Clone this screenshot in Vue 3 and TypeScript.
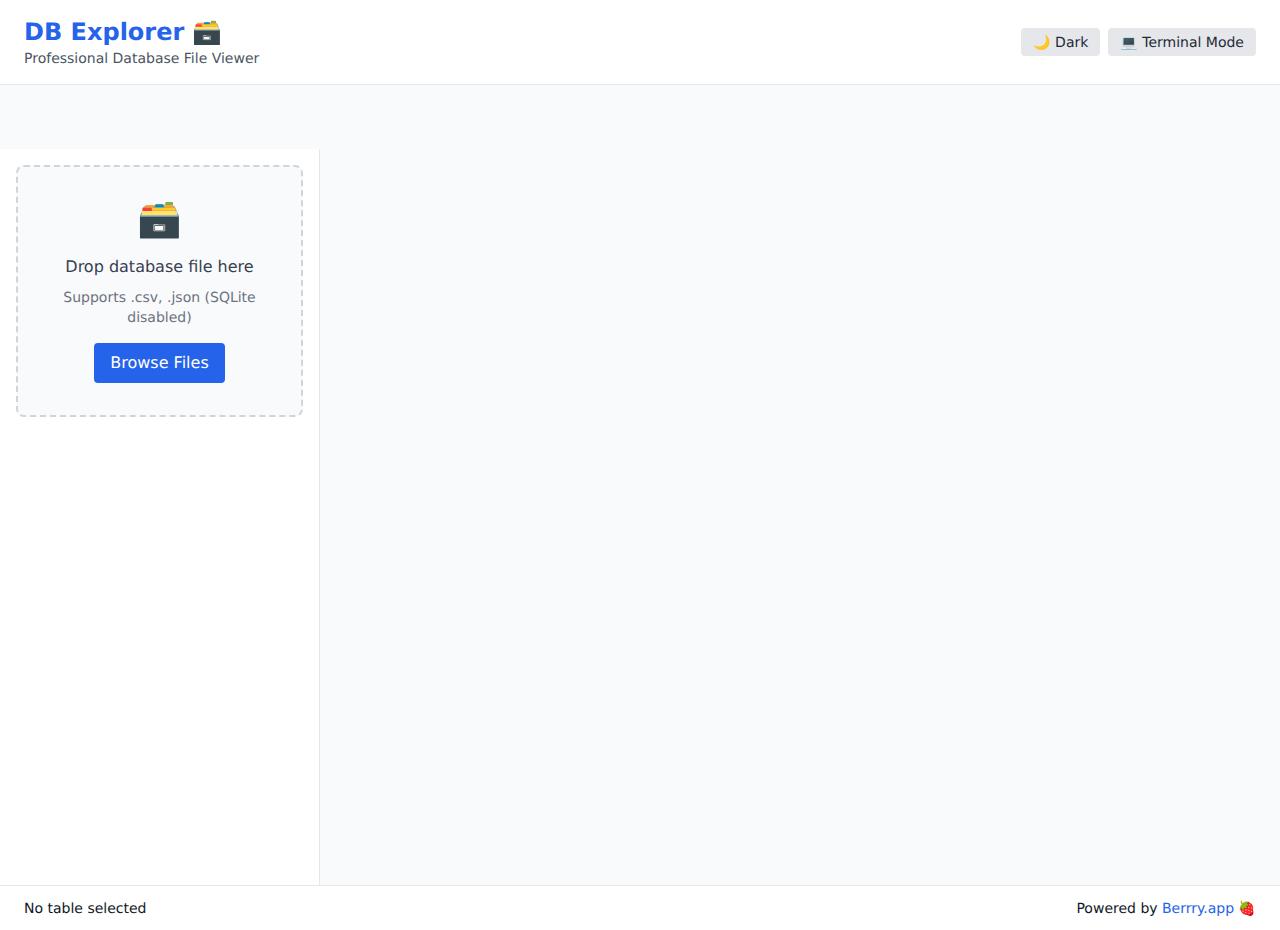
<script setup lang="ts">
const title: string = 'DB Explorer'
</script>

<template>
  <div class="app">
    <header class="header">
      <div class="brand">
        <h1 class="title">{{ title }} 🗃️</h1>
        <p class="subtitle">Professional Database File Viewer</p>
      </div>
      <div class="actions">
        <button class="toggle" type="button">🌙 Dark</button>
        <button class="toggle" type="button">💻 Terminal Mode</button>
      </div>
    </header>
    <div class="spacer"></div>
    <main class="main">
      <aside class="sidebar">
        <div class="dropzone">
          <div class="drop-icon">🗃️</div>
          <p class="drop-title">Drop database file here</p>
          <p class="drop-sub">Supports .csv, .json (SQLite disabled)</p>
          <button class="browse" type="button">Browse Files</button>
        </div>
      </aside>
      <section class="content"></section>
    </main>
    <footer class="footer">
      <span>No table selected</span>
      <span>Powered by <a class="link" href="#">Berrry.app</a> 🍓</span>
    </footer>
  </div>
</template>

<style>
html, body { margin: 0; }
</style>

<style scoped>
* { box-sizing: border-box; }
.app {
  height: 930px;
  display: flex;
  flex-direction: column;
  background: #f9fafb;
  color: #111827;
  font-family: "DejaVu Sans", sans-serif;
  font-size: 14px;
  line-height: 20px;
  text-rendering: geometricPrecision;
}
.header {
  height: 85px;
  flex: none;
  display: flex;
  justify-content: space-between;
  align-items: center;
  padding: 16px 24px;
  background: #fff;
  border-bottom: 1px solid #e5e7eb;
}
.title { margin: 0; font-size: 24px; line-height: 32px; font-weight: 700; color: #2563eb; }
.subtitle { margin: 1px 0 -1px; font-size: 14px; line-height: 20px; color: #4b5563; }
.actions { display: flex; gap: 8px; }
.toggle {
  border: 0;
  padding: 5px 12px 3px;
  border-radius: 4px;
  background: #e5e7eb;
  color: #1f2937;
  font: inherit;
  text-rendering: inherit;
}
.spacer { height: 64px; flex: none; }
.main { flex: 1; min-height: 0; display: flex; }
.sidebar {
  width: 320px;
  flex: none;
  padding: 16px;
  background: #fff;
  border-right: 1px solid #e5e7eb;
}
.dropzone {
  display: flex;
  flex-direction: column;
  align-items: center;
  padding: 32px 24px;
  text-align: center;
  background: #f9fafb;
  border: 2px dashed #d1d5db;
  border-radius: 8px;
}
.drop-icon { font-size: 36px; line-height: 40px; padding-top: 1px; height: 40px; margin-bottom: 16px; }
.drop-title { margin: 0 0 8px; font-size: 16px; line-height: 24px; color: #374151; }
.drop-sub { margin: 1px 0 15px; font-size: 14px; line-height: 20px; color: #6b7280; }
.browse {
  border: 0;
  padding: 8px 16px;
  border-radius: 4px;
  background: #2563eb;
  color: #fff;
  font: inherit;
  font-size: 16px;
  line-height: 24px;
  text-rendering: inherit;
}
.content { flex: 1; }
.footer {
  height: 45px;
  flex: none;
  display: flex;
  justify-content: space-between;
  align-items: center;
  padding: 2px 24px 0;
  background: #fff;
  border-top: 1px solid #e5e7eb;
}
.link { color: #2563eb; text-decoration: none; }
</style>
